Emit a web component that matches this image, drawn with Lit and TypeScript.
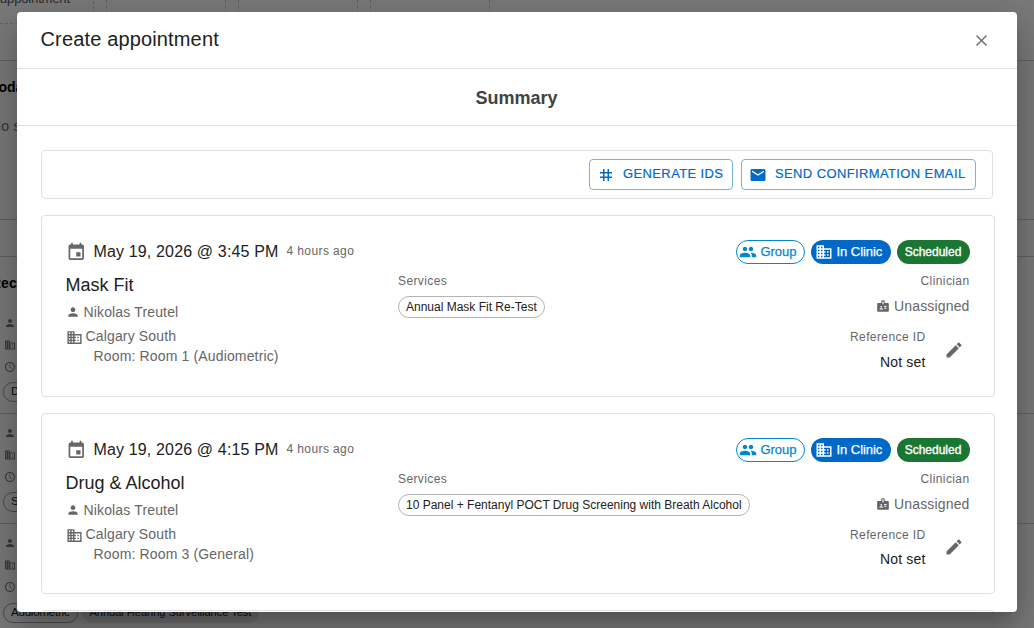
import { LitElement, html, css, svg } from "lit";
import { customElement, property } from "lit/decorators.js";

const PATHS: Record<string, string> = {
  close: "M19 6.41 17.59 5 12 10.59 6.41 5 5 6.41 10.59 12 5 17.59 6.41 19 12 13.41 17.59 19 19 17.59 13.41 12z",
  tag: "M20 10V8h-4V4h-2v4h-4V4H8v4H4v2h4v4H4v2h4v4h2v-4h4v4h2v-4h4v-2h-4v-4h4zm-6 4h-4v-4h4v4z",
  mail: "M20 4H4c-1.1 0-2 .9-2 2v12c0 1.1.9 2 2 2h16c1.1 0 2-.9 2-2V6c0-1.1-.9-2-2-2zm0 4-8 5-8-5V6l8 5 8-5v2z",
  event: "M17 12h-5v5h5v-5zM16 1v2H8V1H6v2H5c-1.11 0-1.99.9-1.99 2L3 19c0 1.1.89 2 2 2h14c1.1 0 2-.9 2-2V5c0-1.1-.9-2-2-2h-1V1h-2zm3 18H5V8h14v11z",
  person: "M12 12c2.21 0 4-1.79 4-4s-1.79-4-4-4-4 1.79-4 4 1.79 4 4 4zm0 2c-2.67 0-8 1.34-8 4v2h16v-2c0-2.66-5.33-4-8-4z",
  business: "M12 7V3H2v18h20V7H12zM6 19H4v-2h2v2zm0-4H4v-2h2v2zm0-4H4V9h2v2zm0-4H4V5h2v2zm4 12H8v-2h2v2zm0-4H8v-2h2v2zm0-4H8V9h2v2zm0-4H8V5h2v2zm10 12h-8v-2h2v-2h-2v-2h2v-2h-2V9h8v10zm-2-8h-2v2h2v-2zm0 4h-2v2h2v-2z",
  people: "M16 11c1.66 0 2.99-1.34 2.99-3S17.66 5 16 5c-1.66 0-3 1.34-3 3s1.34 3 3 3zm-8 0c1.66 0 2.99-1.34 2.99-3S9.66 5 8 5C6.34 5 5 6.34 5 8s1.34 3 3 3zm0 2c-2.33 0-7 1.17-7 3.5V19h14v-2.5c0-2.33-4.67-3.5-7-3.5zm8 0c-.29 0-.62.02-.97.05 1.16.84 1.97 1.97 1.97 3.45V19h6v-2.5c0-2.33-4.67-3.5-7-3.5z",
  badge: "M20 7h-5V4c0-1.1-.9-2-2-2h-2c-1.1 0-2 .9-2 2v3H4c-1.1 0-2 .9-2 2v11c0 1.1.9 2 2 2h16c1.1 0 2-.9 2-2V9c0-1.1-.9-2-2-2zM9 12c.83 0 1.5.67 1.5 1.5S9.83 15 9 15s-1.5-.67-1.5-1.5S8.17 12 9 12zm3 6H6v-.43c0-.6.36-1.15.92-1.39.64-.28 1.34-.43 2.08-.43s1.44.15 2.08.43c.55.24.92.78.92 1.39V18zm1-9h-2V4h2v5zm5 7.5h-4V15h4v1.5zm0-3h-4V12h4v1.5z",
  edit: "M3 17.25V21h3.75L17.81 9.94l-3.75-3.75L3 17.25zM20.71 7.04c.39-.39.39-1.02 0-1.41l-2.34-2.34c-.39-.39-1.02-.39-1.41 0l-1.83 1.83 3.75 3.75 1.83-1.83z",
  clock: "M11.99 2C6.47 2 2 6.48 2 12s4.47 10 9.99 10C17.52 22 22 17.52 22 12S17.52 2 11.99 2zM12 20c-4.42 0-8-3.58-8-8s3.58-8 8-8 8 3.58 8 8-3.58 8-8 8zm.5-13H11v6l5.25 3.15.75-1.23-4.5-2.67z",
};

const icon = (name: string, size: number) =>
  html`<svg class="icon" width=${size} height=${size} viewBox="0 0 24 24" fill="currentColor">${svg`<path d=${PATHS[name]}></path>`}</svg>`;

interface Appointment {
  time: string;
  title: string;
  room: string;
  service: string;
}

const APPOINTMENTS: Appointment[] = [
  { time: "May 19, 2026 @ 3:45 PM", title: "Mask Fit", room: "Room: Room 1 (Audiometric)", service: "Annual Mask Fit Re-Test" },
  { time: "May 19, 2026 @ 4:15 PM", title: "Drug & Alcohol", room: "Room: Room 3 (General)", service: "10 Panel + Fentanyl POCT Drug Screening with Breath Alcohol" },
];

@customElement("appointment-card")
class AppointmentCard extends LitElement {
  @property({ attribute: false }) item!: Appointment;

  static styles = css`
    :host { display: block; box-sizing: border-box; height: 182px; border: 1px solid #e0e0e0; border-radius: 4px; padding: 24px 24px 0; font-size: 14px; line-height: 20px; letter-spacing: 0.15px; color: #666; }
    :host(.short) { height: 181px; }
    :host(.short) .value { margin-top: 4px; }
    .icon { display: block; flex: none; }
    .top { display: flex; height: 24px; align-items: center; }
    .event { color: #666; margin-left: -0.4px; }
    .time { font-size: 16px; letter-spacing: 0.15px; color: #212121; margin-left: 7.4px; white-space: nowrap; }
    .ago { font-size: 12px; letter-spacing: 0.4px; margin-left: 8px; padding-bottom: 2px; }
    .chips { margin-left: auto; display: flex; gap: 6px; }
    .chip { box-sizing: border-box; height: 24px; border-radius: 12px; display: flex; align-items: center; font-size: 13px; line-height: 24px; letter-spacing: -0.05px; color: #fff; -webkit-text-stroke: 0.25px currentColor; white-space: nowrap; }
    .group { width: 69px; border: 1px solid #0288d1; color: #0288d1; padding-left: 2px; gap: 3.5px; background: #fff; }
    .clinic { width: 80px; background: #0069c8; padding-left: 4px; gap: 3.5px; }
    .status { width: 73px; background: #1b7634; justify-content: center; font-size: 12px; padding-right: 1px; letter-spacing: 0; -webkit-text-stroke: 0.35px currentColor; }
    .body { display: grid; grid-template-columns: 332px 1fr 130px; }
    .title { font-size: 18px; line-height: 24px; letter-spacing: 0; color: #212121; margin: 9px 0 0 -0.5px; }
    .person { display: flex; align-items: center; gap: 3.5px; margin-top: 5px; }
    .place { display: flex; align-items: center; gap: 3px; margin: 4px 0 0 -0.5px; }
    .place .icon { margin-top: 3px; }
    .room { margin-left: 27.5px; white-space: nowrap; }
    .label { font-size: 12px; letter-spacing: 0.4px; line-height: 20px; margin-top: 7px; }
    .service { display: inline-block; box-sizing: border-box; height: 22px; line-height: 20px; margin-top: 5px; padding: 0 7px; border: 1px solid #b5b5b5; border-radius: 11px; font-size: 12px; letter-spacing: 0; color: #212121; white-space: nowrap; }
    .right { display: flex; flex-direction: column; align-items: flex-end; }
    .right > .label, .unassigned { padding-right: 0.5px; }
    .unassigned { display: flex; align-items: center; gap: 4px; margin-top: 5px; }
    .ref { display: flex; align-items: center; gap: 18.5px; margin-top: 11px; padding-right: 6px; }
    .reftext { text-align: right; }
    .reftext .label { margin-top: 0; }
    .value { color: #212121; margin-top: 5px; }
  `;

  render() {
    const a = this.item;
    return html`
      <div class="top">
        <span class="event">${icon("event", 20.5)}</span>
        <span class="time">${a.time}</span>
        <span class="ago">4 hours ago</span>
        <div class="chips">
          <span class="chip group">${icon("people", 18)}<span>Group</span></span>
          <span class="chip clinic">${icon("business", 18)}<span>In Clinic</span></span>
          <span class="chip status">Scheduled</span>
        </div>
      </div>
      <div class="body">
        <div>
          <div class="title">${a.title}</div>
          <div class="person">${icon("person", 14)}<span>Nikolas Treutel</span></div>
          <div class="place">${icon("business", 17)}<span>Calgary South</span></div>
          <div class="room">${a.room}</div>
        </div>
        <div>
          <div class="label">Services</div>
          <span class="service">${a.service}</span>
        </div>
        <div class="right">
          <div class="label">Clinician</div>
          <div class="unassigned">${icon("badge", 14)}<span>Unassigned</span></div>
          <div class="ref">
            <div class="reftext">
              <div class="label">Reference ID</div>
              <div class="value">Not set</div>
            </div>
            ${icon("edit", 20)}
          </div>
        </div>
      </div>
    `;
  }
}

@customElement("app-root")
class AppRoot extends LitElement {
  static styles = css`
    :host { display: block; position: relative; width: 1034px; height: 628px; overflow: hidden; background: #f5f5f5; font-family: "Liberation Sans", Arial, sans-serif; color: #212121; }
    .icon { display: block; flex: none; }
    .page { height: 628px; font-size: 14px; overflow: hidden; }
    .slots { box-sizing: border-box; height: 61px; border-bottom: 1px solid #c4c4c4; }
    .slotrow { box-sizing: border-box; width: 502px; height: 24px; border-bottom: 1px dashed #c8c8c8; display: flex; }
    .slot { box-sizing: border-box; width: 132px; padding-right: 12px; flex: none; }
    .slot:first-child { width: 106px; }
    .slot span { display: block; height: 24px; border-right: 1px dashed #c8c8c8; border-left: 1px dashed #c8c8c8; }
    .slot:first-child span { border-left: 0; font-size: 13px; line-height: 16px; margin-top: -9px; height: 33px; color: #555; letter-spacing: -0.15px; }
    .today { box-sizing: border-box; height: 159px; border-bottom: 1px solid #c4c4c4; padding-top: 16px; }
    .heading { font-size: 14px; font-weight: 700; line-height: 20px; margin-left: -9px; color: #000; }
    .empty { margin: 19px 0 0 -9px; line-height: 20px; color: #666; letter-spacing: 0.2px; }
    .gap { box-sizing: border-box; height: 37px; border-bottom: 1px solid #c4c4c4; }
    .recent { padding-top: 16px; height: 40px; box-sizing: border-box; }
    .entry { box-sizing: border-box; height: 110px; border-bottom: 1px solid #c4c4c4; padding: 13px 0 0 4px; color: #777; }
    .entry.first { height: 117px; padding-top: 20px; }
    .entry .icon { margin-bottom: 10px; }
    .tags { display: flex; gap: 4px; margin: -1px 0 0 -1px; }
    .entry.last .tags { margin-top: 1px; }
    .tag { box-sizing: border-box; height: 20px; border: 1px solid #999; border-radius: 10px; padding: 0 7px; font-size: 11.5px; line-height: 17px; letter-spacing: -0.2px; color: #212121; white-space: nowrap; }
    .tag.soft { background: #dedede; border-color: #dedede; font-size: 11px; letter-spacing: 0; }
    .backdrop { position: absolute; inset: 0; padding: 12px 17px 16px; background: rgba(0, 0, 0, 0.5); }
    .dialog { display: flex; flex-direction: column; width: 1000px; height: 600px; background: #fff; border-radius: 4px; overflow: hidden; box-shadow: 0 11px 15px -7px rgba(0,0,0,.2), 0 24px 38px 3px rgba(0,0,0,.14), 0 9px 46px 8px rgba(0,0,0,.12); }
    .header { box-sizing: border-box; flex: none; height: 57px; border-bottom: 1px solid #e0e0e0; display: flex; align-items: center; justify-content: space-between; padding: 0 26.5px 0 23.5px; font-size: 20px; letter-spacing: 0.15px; }
    .header span { padding-bottom: 2px; }
    .header .icon { color: #757575; }
    .summary { box-sizing: border-box; flex: none; height: 57px; border-bottom: 1px solid #e0e0e0; text-align: center; font-size: 18px; font-weight: 700; line-height: 59px; color: #424242; padding-right: 1px; }
    .content { padding: 24px 22px 0 24px; }
    .toolbar { box-sizing: border-box; width: 952px; height: 49px; border: 1px solid #e0e0e0; border-radius: 4px; display: flex; justify-content: flex-end; align-items: flex-start; gap: 8px; padding: 8px 16px; }
    .button { box-sizing: border-box; height: 31px; border: 1px solid #7ab2e4; border-radius: 4px; display: flex; align-items: center; color: #006bc9; font-size: 13px; letter-spacing: 0.38px; -webkit-text-stroke: 0.2px currentColor; white-space: nowrap; padding-left: 7px; gap: 8px; }
    .button span { padding-bottom: 2px; }
    .generate { width: 144px; }
    .send { width: 235px; }
    .cards { display: flex; flex-direction: column; gap: 16px; margin-top: 16px; }
    .next { box-sizing: border-box; height: 181px; border: 1px solid #e0e0e0; border-radius: 4px; }
  `;

  render() {
    return html`
      <div class="page">
        <div class="slots">
          <div class="slotrow">
            <div class="slot"><span>appointment</span></div>
            <div class="slot"><span></span></div>
            <div class="slot"><span></span></div>
            <div class="slot"><span></span></div>
          </div>
        </div>
        <div class="today">
          <div class="heading">Today</div>
          <div class="empty">No s</div>
        </div>
        <div class="gap"></div>
        <div class="recent"><div class="heading">Recent</div></div>
        ${["D", "S", "Audiometric"].map((tag, i) => html`
          <div class="entry ${["first", "", "last"][i]}">
            ${icon("person", 12)}${icon("business", 12)}${icon("clock", 12)}
            <div class="tags">
              <span class="tag">${tag}</span>
              ${i === 2 ? html`<span class="tag soft">Annual Hearing Surveillance Test</span>` : ""}
            </div>
          </div>`)}
      </div>
      <div class="backdrop">
        <div class="dialog">
          <div class="header"><span>Create appointment</span>${icon("close", 19)}</div>
          <div class="summary">Summary</div>
          <div class="content">
            <div class="toolbar">
              <div class="button generate">${icon("tag", 18)}<span>GENERATE IDS</span></div>
              <div class="button send">${icon("mail", 18)}<span>SEND CONFIRMATION EMAIL</span></div>
            </div>
            <div class="cards">
              ${APPOINTMENTS.map((a, i) => html`<appointment-card class=${i === 1 ? "short" : ""} .item=${a}></appointment-card>`)}
              <div class="next"></div>
            </div>
          </div>
        </div>
      </div>
    `;
  }
}
